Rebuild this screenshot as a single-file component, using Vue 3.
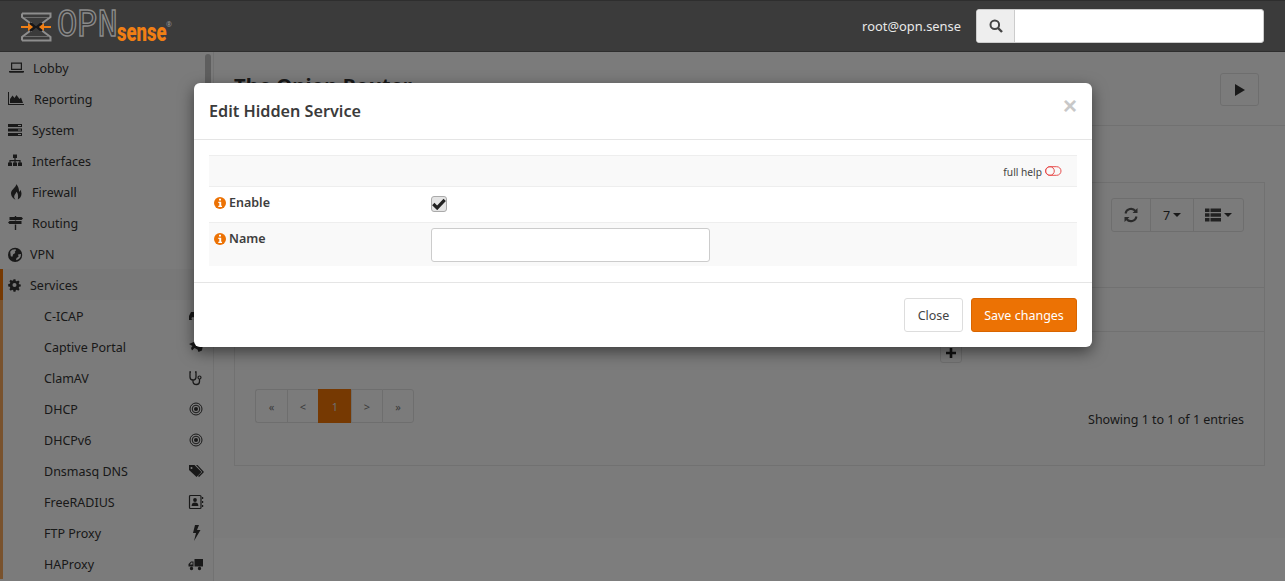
<script setup>
const menu = [
  { label: 'Lobby', icon: 'laptop', gap: 'g1', vb: '-1 0 16 16' },
  { label: 'Reporting', icon: 'chart', gap: 'g2', vb: '0 0 16 16' },
  { label: 'System', icon: 'server', gap: 'g3', vb: '1 0 16 16' },
  { label: 'Interfaces', icon: 'sitemap', gap: 'g3', vb: '1 0 16 16' },
  { label: 'Firewall', icon: 'fire', gap: 'g3', vb: '0 0 16 16' },
  { label: 'Routing', icon: 'signs', gap: 'g3', vb: '0.500 0 16 16' },
  { label: 'VPN', icon: 'globe', gap: 'g4', vb: '1 -1 18 18' },
  { label: 'Services', icon: 'gear', gap: 'g5', vb: '0 -1.800 19.700 19.700', active: true }
]
const sub = [
  { label: 'C-ICAP', icon: 'cicap' },
  { label: 'Captive Portal', icon: 'plane' },
  { label: 'ClamAV', icon: 'steth' },
  { label: 'DHCP', icon: 'target' },
  { label: 'DHCPv6', icon: 'target' },
  { label: 'Dnsmasq DNS', icon: 'tags' },
  { label: 'FreeRADIUS', icon: 'book' },
  { label: 'FTP Proxy', icon: 'bolt' },
  { label: 'HAProxy', icon: 'truck' }
]
const paths = {
  laptop: 'M2 2.500h11v7.500H2zM3.200 3.700v5.100h8.600V3.700zM0 11h15v.8a1 1 0 0 1-1 1H1a1 1 0 0 1-1-1z',
  chart: 'M0 1h1v12h15v1H0zM2 12V8l2.500-3.500L6.500 7l2-3 3 4 1.500-1.500L15 12z',
  server: 'M1 2h14v3H1zM1 6.500h14v3H1zM1 11h14v3H1zM11 3v1h3V3zM11 7.500v1h3v-1zM11 12v1h3v-1z',
  sitemap: 'M6 1.500h4v3.500H8.600v2h5v2.500h1.400V13h-4V9.500h1.400V8.200H8.600v1.300H10V13H6V9.500h1.400V8.200H3.600v1.300H5V13H1V9.500h1.400V7h5V5H6z',
  fire: 'M8 0c1 2.800-4.500 5-5 9 0 3 2 5.800 4.500 6.500-1.300-1.300-1.700-2.700-1-4.300.5-1.200 1.500-1.700 1.800-3.500 1.400 1.200 2.300 3.300 1.500 7.800 2.200-1 3.700-3.200 3.700-5.800 0-1.500-.6-3-1.200-4-.1 1.200-.6 1.900-1.200 2.100C11 5.500 10.500 1.800 8 0z',
  signs: 'M7.300 1h1.400v1H14l1.500 1.500L14 5H2V2h5.300zM2 6h5.300V5.500h1.400V6H14v3H2L.5 7.500zM7.300 9.500h1.400V15H7.300z',
  globe: 'M9 1a8 8 0 1 0 0 16A8 8 0 0 0 9 1zM3.500 5.500l2.200-2.300 3.500-.6 1 1-1.600 1.800.6 1.600-2.400 1.300-.9 2.900-1.800-.7zM10 15l.6-2.400 2.300-1.600-.6-2.400 3.200-.6c.4 3.200-1.800 6.300-5.500 7z',
  gear: 'M6.800 1h2.400l.4 2 1.300.5 1.700-1.100 1.700 1.700-1.100 1.700.5 1.300 2 .4v2.400l-2 .4-.5 1.300 1.100 1.700-1.700 1.700-1.700-1.100-1.300.5-.4 2H6.800l-.4-2-1.300-.5-1.700 1.100-1.700-1.700 1.100-1.700-.5-1.300-2-.4V6.800l2-.4.5-1.300-1.100-1.700 1.700-1.700 1.700 1.100 1.300-.5zM8 5.500a2.500 2.500 0 1 0 0 5 2.500 2.500 0 0 0 0-5z',
  cicap: 'M3 4h10l2 4v4H1V8zM5 9a1.500 1.500 0 1 0 0 3 1.500 1.500 0 0 0 0-3zM11 9a1.500 1.500 0 1 0 0 3 1.500 1.500 0 0 0 0-3z',
  plane: 'M1 5l7-3 1 1-1.500 2L12 3.500l1 2.500 2-.5-1 6-3.500 1.500-1-2.500L6.500 9 4 11.500 3 9l1.500-2z',
  tags: 'M1 2h5.500l7 7-5 5-7.500-7zM3.500 4a1 1 0 1 0 0 2 1 1 0 0 0 0-2zM8 2h1.500l6.500 7-5 5-1-1 4.300-4z',
  bolt: 'M7 0h4L9 5h3.500L6 16l2-8H5z',
  truck: 'M6.500 3H15v7.500H6.500zM5.500 5.500H3L.5 8v2.500h5zM4.500 6.500v2H1.900L3.300 6.500zM3.500 10.800a1.700 1.700 0 1 0 0 3.400 1.700 1.700 0 0 0 0-3.400zM11.500 10.800a1.700 1.700 0 1 0 0 3.400 1.700 1.700 0 0 0 0-3.400z'
}
</script>

<template>
  <div class="page">
    <header class="topbar">
      <div class="brand">
        <svg class="logo" width="31" height="30" viewBox="0 0 31 30">
          <path d="M1 1.500h28.500v3.500l-8 6h-2M1 28.500h28.500V25l-8-6h-2M1 1.500V5l8 6h2M1 28.500V25l8-6h2" fill="none" stroke="#8e8e8e" stroke-width="2"/>
          <path d="M3 5.500h24M3 24.500h24" stroke="#6c6c6c" stroke-width="1"/>
          <path d="M9 11l5 4-5 4M21 11l-5 4 5 4" fill="none" stroke="#17171a" stroke-width="2.500"/>
          <path d="M0 14h7v-3l5 4-5 4v-3H0zM30 14h-7v-3l-5 4 5 4v-3h7z" fill="#f07f14"/>
        </svg>
        <span class="opn">OPN</span><span class="sense">sense</span><span class="reg">®</span>
      </div>
      <div class="top-right">
        <span class="user">root@opn.sense</span>
        <div class="search">
          <span class="search-addon">
            <svg width="14" height="14" viewBox="0 0 14 14"><circle cx="5.800" cy="5.800" r="4.300" fill="none" stroke="#444" stroke-width="2"/><path d="M9 9l4 4" stroke="#444" stroke-width="2.400"/></svg>
          </span>
          <span class="search-input"></span>
        </div>
      </div>
    </header>

    <div class="body">
      <aside class="sidebar">
        <div v-for="m in menu" :key="m.label" class="item" :class="[m.gap, { active: m.active }]">
          <svg class="ic" width="16" height="16" :viewBox="m.vb"><path :d="paths[m.icon]" fill="#333" fill-rule="evenodd"/></svg>
          <span>{{ m.label }}</span>
        </div>
        <div v-for="s in sub" :key="s.label" class="subitem">
          <span>{{ s.label }}</span>
          <svg v-if="s.icon === 'target'" class="sub-ic" width="16" height="16" viewBox="0 0 16 16"><g fill="none" stroke="#333"><circle cx="8" cy="8" r="6"/><circle cx="8" cy="8" r="3.800"/></g><circle cx="8" cy="8" r="2" fill="#333"/></svg>
          <svg v-else-if="s.icon === 'steth'" class="sub-ic" width="16" height="16" viewBox="0 0 16 16"><path d="M3 2H2v5c0 2 1.500 3 3 3s3-1 3-3V2H7M5 10v1.500C5 13.500 6.500 14.500 8.500 14.500s3-1.500 3-3V9" fill="none" stroke="#333" stroke-width="1.300"/><circle cx="11.500" cy="7.500" r="1.500" fill="none" stroke="#333" stroke-width="1.200"/></svg>
          <svg v-else-if="s.icon === 'book'" class="sub-ic" width="16" height="16" viewBox="0 0 16 16"><rect x="1.500" y="1.500" width="11.500" height="13" rx="1" fill="none" stroke="#333" stroke-width="1.200"/><circle cx="7" cy="6" r="1.900" fill="#333"/><path d="M3.600 12c0-2.500 1.200-3.500 3.400-3.500s3.400 1 3.400 3.500z" fill="#333"/><path d="M14 3h1.200v2H14zM14 7h1.200v2H14zM14 11h1.200v2H14z" fill="#333"/></svg>
          <svg v-else class="sub-ic" width="16" height="16" viewBox="0 0 16 16"><path :d="paths[s.icon]" fill="#333" fill-rule="evenodd"/></svg>
        </div>
        <div class="scrollbar"></div>
      </aside>

      <main class="main">
        <div class="content">
          <div class="title-row">
            <h1>The Onion Router</h1>
            <button class="btn play"><svg width="12" height="14" viewBox="0 0 12 14"><path d="M1 1l10 6-10 6z" fill="#333"/></svg></button>
          </div>
          <div class="tab-gap"></div>
          <section class="card">
            <div class="toolbar">
              <div class="btn-group">
                <span class="tb t1"><svg width="16" height="16" viewBox="0 0 16 16"><path d="M2.500 6.500A5.700 5.700 0 0 1 12.500 4M13.500 9.500A5.700 5.700 0 0 1 3.500 12" fill="none" stroke="#555" stroke-width="2"/><path d="M14.500 1v5h-5zM1.500 15v-5h5z" fill="#555"/></svg></span>
                <span class="tb t2">7<i class="caret"></i></span>
                <span class="tb t3"><svg width="16" height="14" viewBox="0 0 16 14"><path d="M0 .500h4.500v3.500H0zM5.500 .500H16v3.500H5.500zM0 5.200h4.500v3.500H0zM5.500 5.200H16v3.500H5.500zM0 10h4.500v3.500H0zM5.500 10H16v3.500H5.500z" fill="#444"/></svg><i class="caret"></i></span>
              </div>
            </div>
            <div class="tbl-row"></div>
            <div class="tbl-row plus-row">
              <span class="plus-btn"><svg width="10" height="10" viewBox="0 0 10 10"><path d="M3.700 0h2.600v3.700H10v2.600H6.300V10H3.700V6.300H0V3.700h3.700z" fill="#222"/></svg></span>
            </div>
            <div class="foot">
              <div class="pager">
                <span class="pg">«</span><span class="pg">&lt;</span><span class="pg cur">1</span><span class="pg">&gt;</span><span class="pg">»</span>
              </div>
              <span class="showing">Showing 1 to 1 of 1 entries</span>
            </div>
          </section>
        </div>
        <div class="main-foot"></div>
      </main>
    </div>

    <div class="backdrop"></div>

    <div class="modal">
      <div class="modal-head">
        <h4>Edit Hidden Service</h4>
        <span class="close">×</span>
      </div>
      <div class="modal-body">
        <div class="row help-row">
          <span class="full-help">full help</span>
          <svg width="17" height="10" viewBox="0 0 17 10"><rect x="0.500" y="0.700" width="15.500" height="8.600" rx="4.300" fill="none" stroke="#e8504f"/><circle cx="5" cy="5" r="4.300" fill="none" stroke="#e8504f"/></svg>
        </div>
        <div class="row enable-row">
          <label class="lbl">
            <svg class="info" width="12" height="12" viewBox="0 0 12 12"><circle cx="6" cy="6" r="6" fill="#ec7204"/><path d="M5 1.800h2v1.800H5zM4.300 4.800h2.900v3.900H8v1.300H4.300V8.700h1V6.100h-1z" fill="#fff"/></svg>
            Enable
          </label>
          <span class="check"><svg width="14" height="12" viewBox="0 0 13 11"><path d="M1.200 5.500l3.600 3.600 7-7.400" fill="none" stroke="#222" stroke-width="3"/></svg></span>
        </div>
        <div class="row name-row">
          <label class="lbl">
            <svg class="info" width="12" height="12" viewBox="0 0 12 12"><circle cx="6" cy="6" r="6" fill="#ec7204"/><path d="M5 1.800h2v1.800H5zM4.300 4.800h2.900v3.900H8v1.300H4.300V8.700h1V6.100h-1z" fill="#fff"/></svg>
            Name
          </label>
          <span class="name-input"></span>
        </div>
      </div>
      <div class="modal-foot">
        <button class="mbtn">Close</button>
        <button class="mbtn primary">Save changes</button>
      </div>
    </div>
  </div>
</template>

<style>
html, body { margin: 0; height: 100%; overflow: hidden; }
</style>

<style scoped>
.page {
  position: relative;
  width: 1285px;
  height: 581px;
  overflow: hidden;
  font-family: "Noto Sans", sans-serif;
  font-size: 12.500px;
  color: #333;
  background: #f7f7f7;
}
.topbar {
  position: relative;
  z-index: 30;
  height: 52px;
  box-sizing: border-box;
  background: #3b3b3b;
  border-top: 1px solid #2e2e2e;
  border-bottom: 1px solid #2e2e2e;
  display: flex;
  justify-content: space-between;
  align-items: center;
  padding: 0 21px 0 21px;
}
.brand { display: flex; align-items: center; height: 34px; }
.logo { margin-right: 5px; margin-top: 1px; flex: none; }
.opn { display: inline-block; width: 60px; font-family: "Liberation Mono", monospace; font-size: 38px; line-height: 34px; color: transparent; -webkit-text-stroke: 1.500px #8a8a8a; transform: scaleX(.89); transform-origin: left center; white-space: nowrap; }
.sense { display: inline-block; width: 51px; font-family: "Roboto", sans-serif; font-weight: 900; font-size: 25px; line-height: 20px; color: #f07f14; margin-top: 13px; transform: scaleX(.74); transform-origin: left center; white-space: nowrap; }
.reg { font-size: 7px; color: #999; margin-top: -3px; margin-left: -2px; }
.top-right { display: flex; align-items: center; }
.user { color: #e8e8e8; font-size: 12.900px; margin-right: 15px; }
.search { display: flex; width: 288px; height: 34px; box-sizing: border-box; border: 1px solid #ccc; border-radius: 3px; overflow: hidden; background: #fff; }
.search-addon { width: 38px; box-sizing: border-box; background: #eee; border-right: 1px solid #ccc; display: flex; align-items: center; justify-content: center; }
.search-input { flex: 1; }
.body { display: flex; height: 529px; }
.sidebar { position: relative; width: 214px; flex: none; box-sizing: border-box; border-right: 1px solid #e5e5e5; background: #f7f7f7; overflow: hidden; }
.item { height: 31px; display: flex; align-items: center; padding-left: 8px; box-sizing: border-box; }
.item span, .subitem span { padding-top: 2px; }
.item.g1 span { margin-left: 9px; }
.item.g2 span { margin-left: 10px; }
.item.g3 span { margin-left: 8px; }
.item.g4 span { margin-left: 6px; }
.item.g5 span { margin-left: 6px; }
.item.active { border-left: 3px solid #ec7204; padding-left: 5px; background: #f0f0f0; }
.subitem { height: 31px; display: flex; align-items: center; justify-content: space-between; padding: 0 9px 0 41px; border-left: 3px solid #f3a55a; box-sizing: border-box; background: #f7f7f7; }
.ic { flex: none; }
.scrollbar { position: absolute; left: 205px; top: 2px; width: 6px; height: 200px; border-radius: 3px; background: #bdbdbd; }
.main { flex: 1; display: flex; flex-direction: column; background: #f7f7f7; }
.content { height: 486px; box-sizing: border-box; padding: 0 20px; background: #f7f7f7; }
.main-foot { flex: 1; background: #fbfbfb; }
.title-row { height: 74px; box-sizing: border-box; margin: 0 -20px; padding: 21px 26px 0 20px; display: flex; justify-content: space-between; align-items: flex-start; border-bottom: 1px solid #e3e3e3; }
h1 { margin: 0; font-size: 20.300px; font-weight: 700; line-height: 24px; color: #333; }
.btn { width: 39px; height: 33px; box-sizing: border-box; border: 1px solid #ddd; border-radius: 3px; background: #f7f7f7; display: flex; align-items: center; justify-content: center; padding: 0; }
.tab-gap { height: 56px; }
.card { height: 284px; box-sizing: border-box; border: 1px solid #e3e3e3; background: #f7f7f7; }
.toolbar { height: 104px; box-sizing: border-box; padding: 15px 20px 0 0; display: flex; justify-content: flex-end; align-items: flex-start; }
.btn-group { display: flex; height: 34px; border: 1px solid #dcdcdc; border-radius: 3px; box-sizing: border-box; }
.tb { display: flex; align-items: center; justify-content: center; height: 100%; box-sizing: border-box; }
.t1 { width: 39px; border-right: 1px solid #dcdcdc; }
.t2 { width: 43px; border-right: 1px solid #dcdcdc; }
.t3 { width: 49px; }
.caret { display: inline-block; width: 0; height: 0; margin-left: 3px; border-left: 4px solid transparent; border-right: 4px solid transparent; border-top: 4px solid #333; }
.tbl-row { height: 43px; border-top: 1px solid #e3e3e3; }
.plus-row { position: relative; height: 57px; }
.plus-btn { position: absolute; left: 705px; top: 10px; width: 22px; height: 21px; box-sizing: border-box; border: 1px solid #ddd; border-radius: 3px; display: flex; align-items: center; justify-content: center; }
.foot { display: flex; justify-content: space-between; align-items: flex-start; padding: 0 20px; }
.pager { display: flex; height: 34px; }
.pg { width: 31px; height: 34px; box-sizing: border-box; display: flex; align-items: center; justify-content: center; border: 1px solid #ddd; border-right: 0; color: #777; font-size: 11px; }
.pg:first-child { width: 32px; border-radius: 3px 0 0 3px; }
.pg:last-child { border-right: 1px solid #ddd; border-radius: 0 3px 3px 0; width: 32px; }
.pg.cur { width: 33px; background: #ec7204; border-color: #ec7204; color: #ddd; }
.showing { margin-top: 21px; color: #333; line-height: 20px; }
.backdrop { position: absolute; inset: 0; z-index: 10; background: rgba(0, 0, 0, .5); }
.modal { position: absolute; z-index: 20; left: 194px; top: 83px; width: 898px; height: 264px; box-sizing: border-box; background: #fff; border-radius: 6px; box-shadow: 0 5px 15px rgba(0, 0, 0, .5); display: flex; flex-direction: column; }
.modal-head { height: 57px; box-sizing: border-box; border-bottom: 1px solid #e5e5e5; padding: 0 15px; display: flex; align-items: center; justify-content: space-between; }
h4 { margin: 0; font-size: 16.200px; font-weight: 600; color: #3b3b3b; }
.close { font-family: "Liberation Sans", sans-serif; font-size: 24px; font-weight: 700; color: #c8c8c8; line-height: 1; margin-right: 0; margin-top: -10px; }
.modal-body { padding: 15px 15px 16px; height: 143px; box-sizing: border-box; border-bottom: 1px solid #e5e5e5; }
.row { background: #fff; box-sizing: border-box; border-top: 1px solid #eee; }
.help-row { height: 31px; background: #f9f9f9; display: flex; justify-content: flex-end; align-items: center; padding-right: 15px; gap: 3px; }
.full-help { font-size: 10.200px; color: #444; padding-top: 2px; }
.enable-row { height: 36px; display: flex; align-items: flex-start; padding-top: 7px; }
.name-row { height: 44px; background: #f9f9f9; display: flex; align-items: flex-start; padding-top: 5px; }
.name-row .lbl { padding-top: 2px; }
.lbl { width: 222px; flex: none; box-sizing: border-box; padding-left: 5px; display: flex; align-items: center; gap: 3px; font-weight: 600; font-size: 12.500px; color: #3e3e3e; }
.info { flex: none; }
.check { width: 16px; height: 16px; box-sizing: border-box; border: 1px solid #aaa; border-radius: 3px; background: #e4e4e4; margin-top: 2px; display: flex; align-items: center; justify-content: center; }
.check svg { flex: none; }
.name-input { width: 279px; height: 34px; box-sizing: border-box; border: 1px solid #ccc; border-radius: 3px; background: #fff; }
.modal-foot { flex: 1; display: flex; justify-content: flex-end; align-items: flex-start; padding: 15px 15px 0; gap: 8px; }
.mbtn { height: 34px; box-sizing: border-box; font: inherit; border: 1px solid #ddd; border-radius: 3px; background: #fff; color: #444; padding: 0; width: 59px; white-space: nowrap; }
.mbtn.primary { width: 106px; background: #ec7204; border-color: #d96500; color: #fff; }
</style>
